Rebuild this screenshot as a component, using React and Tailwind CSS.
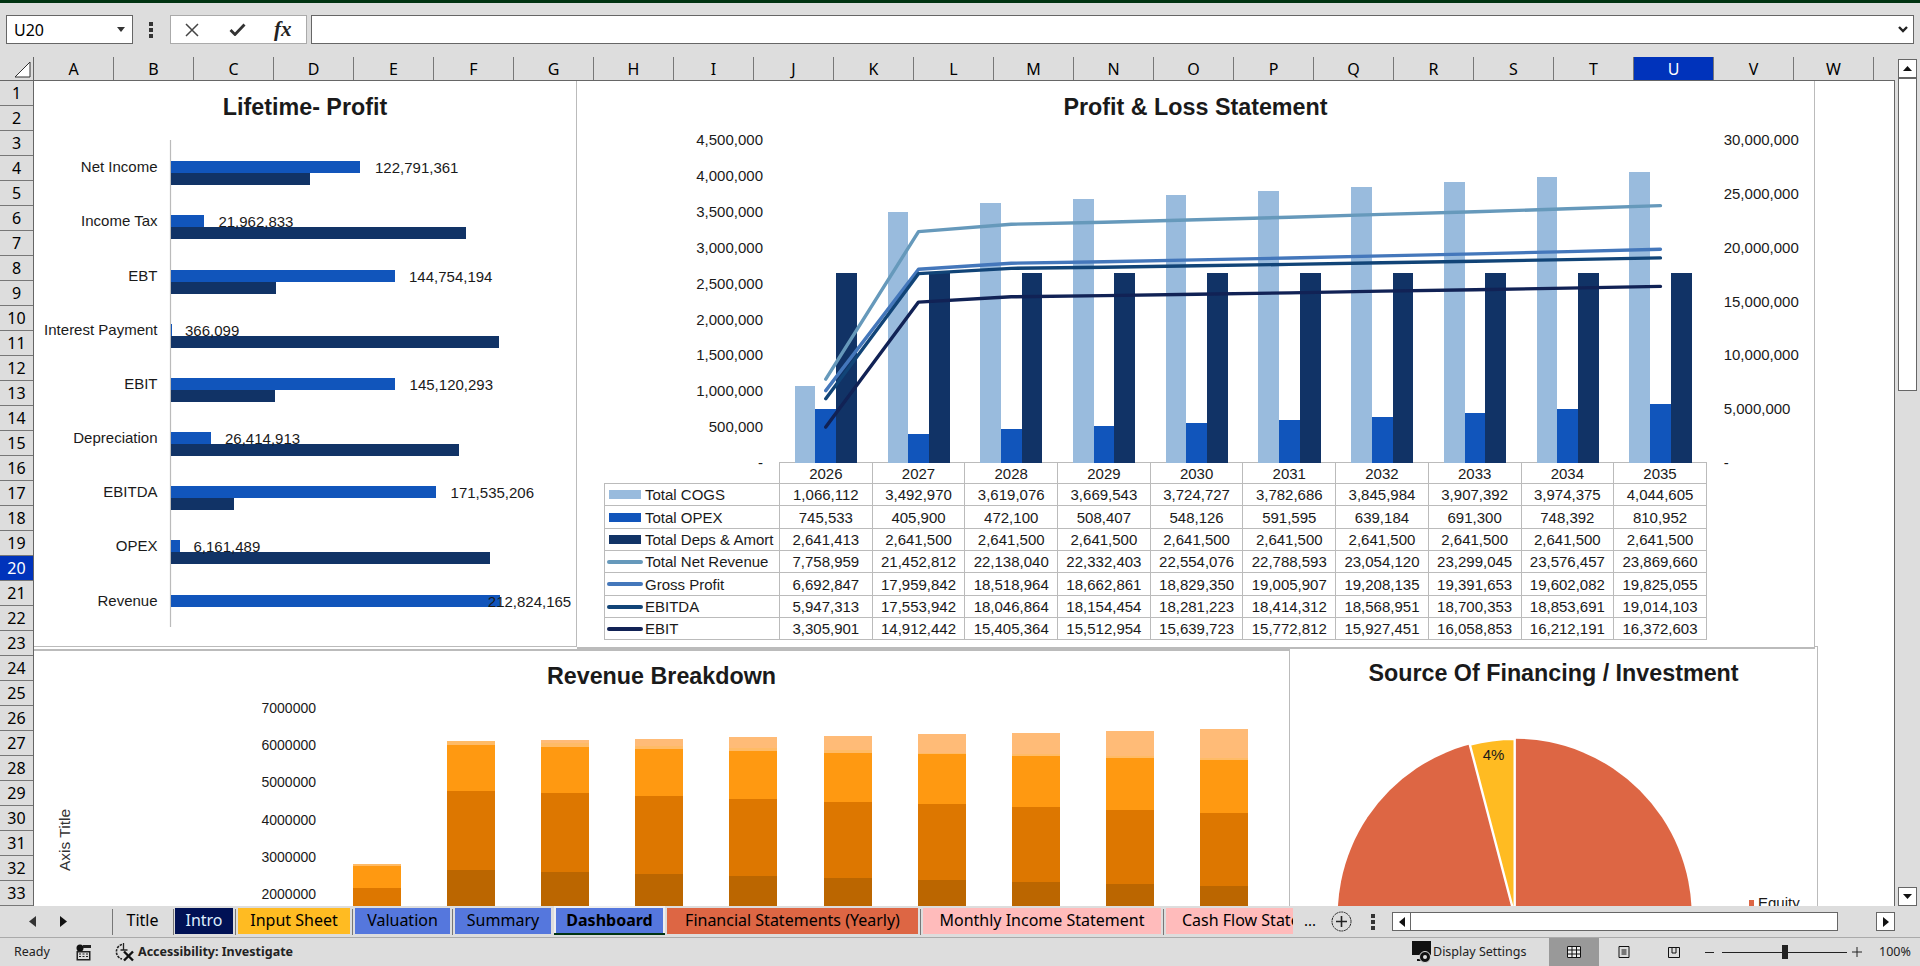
import React from "react";

const COLS = "ABCDEFGHIJKLMNOPQRSTUVW".split("");
const YEARS = [2026, 2027, 2028, 2029, 2030, 2031, 2032, 2033, 2034, 2035];

const TABLE = [
  { name: "Total COGS", kind: "bar", color: "bg-[#99bbdd]", rowH: "h-[22px]", v: [1066112, 3492970, 3619076, 3669543, 3724727, 3782686, 3845984, 3907392, 3974375, 4044605] },
  { name: "Total OPEX", kind: "bar", color: "bg-[#1155bb]", rowH: "h-[23px]", v: [745533, 405900, 472100, 508407, 548126, 591595, 639184, 691300, 748392, 810952] },
  { name: "Total Deps & Amort", kind: "bar", color: "bg-[#113366]", rowH: "h-[22px]", v: [2641413, 2641500, 2641500, 2641500, 2641500, 2641500, 2641500, 2641500, 2641500, 2641500] },
  { name: "Total Net Revenue", kind: "line", color: "bg-[#6699bb]", rowH: "h-[22px]", v: [7758959, 21452812, 22138040, 22332403, 22554076, 22788593, 23054120, 23299045, 23576457, 23869660] },
  { name: "Gross Profit", kind: "line", color: "bg-[#4477bb]", rowH: "h-[23px]", v: [6692847, 17959842, 18518964, 18662861, 18829350, 19005907, 19208135, 19391653, 19602082, 19825055] },
  { name: "EBITDA", kind: "line", color: "bg-[#114477]", rowH: "h-[22px]", v: [5947313, 17553942, 18046864, 18154454, 18281223, 18414312, 18568951, 18700353, 18853691, 19014103] },
  { name: "EBIT", kind: "line", color: "bg-[#112255]", rowH: "h-[22px]", v: [3305901, 14912442, 15405364, 15512954, 15639723, 15772812, 15927451, 16058853, 16212191, 16372603] },
];

const fmt = (n) => n.toLocaleString("en-US");

const LIFETIME = [
  { label: "Net Income", value: "122,791,361", top: 161, blue: 360, dark: 310, vx: 375 },
  { label: "Income Tax", value: "21,962,833", top: 215, blue: 204, dark: 466, vx: 218.4 },
  { label: "EBT", value: "144,754,194", top: 270, blue: 395, dark: 276, vx: 409 },
  { label: "Interest Payment", value: "366,099", top: 324, blue: 172, dark: 499, vx: 185 },
  { label: "EBIT", value: "145,120,293", top: 378, blue: 395, dark: 275, vx: 409.6 },
  { label: "Depreciation", value: "26,414,913", top: 432, blue: 211, dark: 459, vx: 225 },
  { label: "EBITDA", value: "171,535,206", top: 486, blue: 436, dark: 234, vx: 450.6 },
  { label: "OPEX", value: "6,161,489", top: 540, blue: 180, dark: 490, vx: 193.5 },
  { label: "Revenue", value: "212,824,165", top: 595, blue: 500, dark: 0, vx: 487.8 },
];

// y values of each stack: top, pale end, band end, orange end, mid end
const REVENUE = [
  [864, 864, 866, 888, 908],
  [741, 741, 745, 791, 870],
  [740, 743, 747, 793, 872],
  [739, 746, 749, 796, 874],
  [737, 748, 751, 799, 876],
  [736, 750, 753, 802, 878],
  [734, 753, 754, 804, 880],
  [733, 754, 756, 807, 882],
  [731, 756, 758, 810, 884],
  [729, 758, 760, 813, 886],
];

const BASE_Y = 462.7;
const priY = (v) => BASE_Y - (v * 71.8) / 1e6;
const secY = (v) => BASE_Y - (v * 10.77) / 1e6;
const catX = (i) => 779.4 + 92.74 * i + 46.37;

function LifetimeChart() {
  return (
    <svg viewBox="34 133 542 513" width="542" height="513" className="block">
      <g className="font-['Liberation_Sans',sans-serif] text-[15px]" fill="#1a1a1a">
        <line x1="170.5" y1="140" x2="170.5" y2="627" stroke="#bbbbbb" strokeWidth="1.2" />
        {LIFETIME.map((r) => (
          <g key={r.label}>
            <rect x="171" y={r.top} width={r.blue - 171} height="12" fill="#1155bb" />
            {r.dark > 0 && <rect x="171" y={r.top + 12} width={r.dark - 171} height="12" fill="#113366" />}
            <text x="157.5" y={r.top + 11} textAnchor="end">{r.label}</text>
            <text x={r.vx} y={r.top + 12}>{r.value}</text>
          </g>
        ))}
      </g>
    </svg>
  );
}

function PnlPlot() {
  const left = ["4,500,000", "4,000,000", "3,500,000", "3,000,000", "2,500,000", "2,000,000", "1,500,000", "1,000,000", "500,000", "-"];
  const right = ["30,000,000", "25,000,000", "20,000,000", "15,000,000", "10,000,000", "5,000,000", "-"];
  const barColors = ["#99bbdd", "#1155bb", "#113366"];
  const lineColors = ["#6699bb", "#4477bb", "#114477", "#112255"];
  return (
    <svg viewBox="577 133 1237 329" width="1237" height="329" className="block overflow-visible">
      <g shapeRendering="crispEdges">
        {TABLE.slice(0, 3).map((s, si) =>
          s.v.map((v, i) => (
            <rect key={`${si}-${i}`} x={catX(i) - 31 + si * 20.7} y={priY(v)} width="20.7" height={BASE_Y - priY(v)} fill={barColors[si]} />
          ))
        )}
      </g>
      {TABLE.slice(3).map((s, si) => (
        <polyline
          key={s.name}
          points={s.v.map((v, i) => `${catX(i)},${secY(v)}`).join(" ")}
          fill="none"
          stroke={lineColors[si]}
          strokeWidth="3.4"
          strokeLinecap="round"
          strokeLinejoin="round"
        />
      ))}
      <g className="font-['Liberation_Sans',sans-serif] text-[15px]" fill="#1a1a1a">
        {left.map((t, i) => (
          <text key={t} x="763" y={145 + i * 35.9} textAnchor="end">{t}</text>
        ))}
        {right.map((t, i) => (
          <text key={t} x="1723.7" y={145 + i * 53.85}>{t}</text>
        ))}
      </g>
    </svg>
  );
}

function LegendKey({ kind, color }) {
  if (kind === "bar") return <span className={`ml-[4px] mr-[4px] h-[9px] w-[32px] shrink-0 ${color}`} />;
  return <span className={`ml-[2px] mr-[2px] h-[4px] w-[36px] shrink-0 rounded-full ${color}`} />;
}

function PnlTable() {
  return (
    <table className="ml-[27px] w-[1102px] table-fixed border-collapse font-['Liberation_Sans',sans-serif] text-[15px] leading-none text-[#1a1a1a]">
      <colgroup>
        <col className="w-[175px]" />
        {YEARS.map((y) => (
          <col key={y} className="w-[92.7px]" />
        ))}
      </colgroup>
      <thead>
        <tr className="h-[21px]">
          <th className="border-0 p-0" />
          {YEARS.map((y) => (
            <th key={y} className="border border-[#bbbbbb] p-0 text-center font-normal">{y}</th>
          ))}
        </tr>
      </thead>
      <tbody>
        {TABLE.map((row) => (
          <tr key={row.name} className={row.rowH}>
            <td className="border border-[#bbbbbb] p-0">
              <div className="flex items-center whitespace-nowrap">
                <LegendKey kind={row.kind} color={row.color} />
                <span>{row.name}</span>
              </div>
            </td>
            {row.v.map((v, i) => (
              <td key={i} className="border border-[#bbbbbb] p-0 text-center">{fmt(v)}</td>
            ))}
          </tr>
        ))}
      </tbody>
    </table>
  );
}

function RevenueChart() {
  const ticks = ["7000000", "6000000", "5000000", "4000000", "3000000", "2000000"];
  return (
    <svg viewBox="34 702 1255 204" width="1255" height="204" className="block">
      <g className="font-['Liberation_Sans',sans-serif]" fill="#1a1a1a">
        {ticks.map((t, i) => (
          <text key={t} x="316" y={713 + i * 37.2} textAnchor="end" className="text-[14px]">{t}</text>
        ))}
        <text x="64.5" y="840" dy="5" transform="rotate(-90 64.5 840)" textAnchor="middle" fill="#333333" className="text-[15.5px]">Axis Title</text>
      </g>
      <g shapeRendering="crispEdges">
        {REVENUE.map((b, i) => {
          const x = 353 + i * 94.1;
          return (
            <g key={i}>
              <rect x={x} y={b[0]} width="48" height={b[1] - b[0]} fill="#ffbb77" />
              <rect x={x} y={b[1]} width="48" height={b[2] - b[1]} fill="#ffbb66" />
              <rect x={x} y={b[2]} width="48" height={b[3] - b[2]} fill="#ff9911" />
              <rect x={x} y={b[3]} width="48" height={b[4] - b[3]} fill="#dd7700" />
              <rect x={x} y={b[4]} width="48" height={Math.max(0, 906 - b[4])} fill="#bb6600" />
            </g>
          );
        })}
      </g>
    </svg>
  );
}

function PieChart() {
  return (
    <svg viewBox="1290 700 527 206" width="527" height="206" className="block">
      <circle cx="1514.7" cy="915.7" r="177" fill="#dd6644" />
      <path d="M1514.7 915.7 L1469.8 744.5 A177 177 0 0 1 1514.7 738.7 Z" fill="#ffbb22" stroke="#ffffff" strokeWidth="2.4" />
      <g className="font-['Liberation_Sans',sans-serif] text-[15px]" fill="#1a1a1a">
        <text x="1493.5" y="760" textAnchor="middle">4%</text>
        <text x="1758" y="908">Equity</text>
      </g>
      <rect x="1749" y="900" width="5" height="6" fill="#dd6644" />
    </svg>
  );
}

function ChartTitle({ children, className }) {
  return (
    <h2 className={`flex items-center justify-center font-['Liberation_Sans',sans-serif] text-[23.3px] font-bold text-[#1a1a1a] ${className}`}>
      {children}
    </h2>
  );
}

function FormulaBar() {
  return (
    <div className="flex h-[54px] items-start pt-[12px]">
      <div className="ml-[6px] flex h-[29px] w-[127px] items-center justify-between border border-[#666666] bg-white pl-[7px] pr-[7px] text-[16px] text-black">
        <span>U20</span>
        <svg width="8" height="5" viewBox="0 0 8 5"><path d="M0 0h8L4 5z" fill="#333333" /></svg>
      </div>
      <div className="ml-[16px] flex h-[29px] w-[4px] flex-col items-center justify-center gap-[2px]">
        <span className="size-[4px] shrink-0 bg-[#333333]" />
        <span className="size-[4px] shrink-0 bg-[#333333]" />
        <span className="size-[4px] shrink-0 bg-[#333333]" />
      </div>
      <div className="ml-[17px] flex h-[29px] w-[137px] items-center border border-[#aaaaaa] bg-white">
        <svg className="ml-[14px]" width="14" height="14" viewBox="0 0 14 14"><path d="M1 1l12 12M13 1L1 13" stroke="#444444" strokeWidth="1.5" fill="none" /></svg>
        <svg className="ml-[30px]" width="17" height="13" viewBox="0 0 17 13"><path d="M1.5 7l4.5 4.5L15.5 1.5" stroke="#333333" strokeWidth="2.8" fill="none" /></svg>
        <span className="ml-[28px] font-['Liberation_Serif',serif] text-[21px] font-bold italic leading-none text-[#222222]">fx</span>
      </div>
      <div className="ml-[4px] flex h-[29px] w-[1603px] items-center justify-end border border-[#666666] bg-white pr-[5px]">
        <svg width="10" height="7" viewBox="0 0 10 7"><path d="M1 1l4 4 4-4" stroke="#222222" strokeWidth="2.4" fill="none" /></svg>
      </div>
    </div>
  );
}

function ColumnHeader() {
  return (
    <div className="flex h-[24px] border-b border-[#666666]">
      <div className="flex w-[34px] shrink-0 items-end justify-end border-r border-[#666666] pb-[2px] pr-[2px]">
        <svg width="17" height="17" viewBox="0 0 17 17"><path d="M16 1v15H1z" fill="#ffffff" stroke="#333333" strokeWidth="1" /></svg>
      </div>
      {COLS.map((c) => (
        <div
          key={c}
          className={`flex w-[80px] shrink-0 items-center justify-center border-r border-[#777777] text-[16px] ${c === "U" ? "bg-[#0033bb] text-white" : "text-black"}`}
        >
          {c}
        </div>
      ))}
    </div>
  );
}

function RowGutter() {
  return (
    <div className="flex w-[34px] shrink-0 flex-col border-r border-[#666666]">
      {Array.from({ length: 33 }, (_, i) => i + 1).map((n) => (
        <div
          key={n}
          className={`flex h-[25px] shrink-0 items-center justify-center border-b border-[#777777] text-[16px] ${n === 20 ? "bg-[#0033bb] text-white" : "text-black"}`}
        >
          {n}
        </div>
      ))}
    </div>
  );
}

function Sheet() {
  return (
    <div className="flex h-[825px] flex-col overflow-hidden bg-white">
      <div className="relative z-10 flex h-[568px] shrink-0 items-start">
        <div className="h-[566px] w-[543px] shrink-0 border-b border-r border-[#bbbbbb] bg-white">
          <ChartTitle className="h-[52px]">Lifetime- Profit</ChartTitle>
          <LifetimeChart />
        </div>
        <div className="h-[568px] w-[1238px] shrink-0 border-b-2 border-r border-[#bbbbbb] bg-white">
          <ChartTitle className="h-[52px]">{"Profit & Loss Statement"}</ChartTitle>
          <PnlPlot />
          <PnlTable />
        </div>
      </div>
      <div className="flex h-[257px] shrink-0 items-start">
        <div className="h-[257px] w-[1255px] shrink-0 overflow-hidden border-t-2 border-[#bbbbbb] bg-white">
          <ChartTitle className="h-[51px]">Revenue Breakdown</ChartTitle>
          <RevenueChart />
        </div>
        <div className="-mt-[3px] h-[260px] w-[529px] shrink-0 overflow-hidden border-l border-r border-t border-[#bbbbbb] bg-white">
          <ChartTitle className="h-[53px]">Source Of Financing / Investment</ChartTitle>
          <PieChart />
        </div>
      </div>
    </div>
  );
}

function VScrollBar() {
  return (
    <div className="flex h-[849px] w-[25px] flex-col pl-[3px] pt-[2px]">
      <div className="flex h-[19px] w-[19px] items-center justify-center border border-[#666666] bg-white">
        <svg width="9" height="5" viewBox="0 0 9 5"><path d="M4.5 0L9 5H0z" fill="#111111" /></svg>
      </div>
      <div className="h-[313px] w-[19px] border border-[#666666] bg-white" />
      <div className="flex-1" />
      <div className="flex h-[19px] w-[19px] items-center justify-center border border-[#666666] bg-white">
        <svg width="9" height="5" viewBox="0 0 9 5"><path d="M0 0h9L4.5 5z" fill="#111111" /></svg>
      </div>
    </div>
  );
}

function Sep({ className }) {
  return (
    <div className={`flex h-[31px] shrink-0 items-center justify-center ${className}`}>
      <span className="h-[26px] w-px bg-[#777777]" />
    </div>
  );
}

function Tab({ label, className, active }) {
  if (active) {
    return (
      <div className="h-[29px] w-[111px] shrink-0 border-b-2 border-[#003311] bg-[#eeeeee] px-[2px] pt-[2px]">
        <div className="flex h-[25px] items-center justify-center bg-[#5577dd] pb-[2px] text-[16px] font-bold text-black">{label}</div>
      </div>
    );
  }
  return (
    <div className={`mt-[2px] flex h-[26px] shrink-0 items-center justify-center whitespace-nowrap pb-[2px] text-[16px] ${className}`}>{label}</div>
  );
}

function TabBar() {
  return (
    <div className="flex h-[32px] items-start border-b border-[#aaaaaa]">
      <div className="flex h-[31px] w-[112px] shrink-0 items-center pl-[29px]">
        <svg width="7" height="11" viewBox="0 0 7 11"><path d="M7 0v11L0 5.5z" fill="#333333" /></svg>
        <svg className="ml-[24px]" width="7" height="11" viewBox="0 0 7 11"><path d="M0 0v11l7-5.500z" fill="#111111" /></svg>
      </div>
      <Sep className="w-px" />
      <Tab label="Title" className="w-[59px] text-black" />
      <Sep className="w-[3px]" />
      <Tab label="Intro" className="w-[58px] bg-[#001155] text-[#dfefff]" />
      <Sep className="w-[5px]" />
      <Tab label="Input Sheet" className="w-[112px] bg-[#ffbb22] text-black" />
      <Sep className="w-[5px]" />
      <Tab label="Valuation" className="w-[95px] bg-[#5577dd] text-black" />
      <Sep className="w-[5px]" />
      <Tab label="Summary" className="w-[96px] bg-[#5577dd] text-black" />
      <div className="w-[3px] shrink-0" />
      <Tab label="Dashboard" active />
      <div className="w-[2px] shrink-0" />
      <Tab label="Financial Statements (Yearly)" className="w-[251px] bg-[#dd6644] text-black" />
      <Sep className="w-[5px]" />
      <Tab label="Monthly Income Statement" className="w-[238px] bg-[#ffbbbb] text-black" />
      <Sep className="w-[5px]" />
      <Tab label="Cash Flow Statement" className="w-[127px] justify-start overflow-hidden bg-[#ffbbbb] pl-[16px] text-black" />
      <div className="flex h-[31px] w-[34px] shrink-0 items-center justify-center pb-[2px] text-[15px] leading-none text-black">...</div>
      <div className="flex h-[31px] w-[28px] shrink-0 items-center justify-center">
        <svg width="21" height="21" viewBox="0 0 21 21">
          <circle cx="10.5" cy="10.500" r="9.5" fill="none" stroke="#222222" strokeDasharray="2 .6" />
          <path d="M10.500 5v11M5 10.500h11" stroke="#222222" strokeWidth="1.600" />
        </svg>
      </div>
      <div className="ml-[14px] flex h-[31px] w-[8px] shrink-0 flex-col items-center justify-center gap-[2px]">
        <span className="size-[4px] shrink-0 bg-[#333333]" />
        <span className="size-[4px] shrink-0 bg-[#333333]" />
        <span className="size-[4px] shrink-0 bg-[#333333]" />
      </div>
      <div className="ml-[15px] mt-[6px] flex h-[19px] w-[446px] shrink-0 border border-[#666666] bg-white">
        <div className="flex h-full w-[18px] items-center justify-center border-r border-[#666666]">
          <svg width="6" height="10" viewBox="0 0 6 10"><path d="M6 0v10L0 5z" fill="#111111" /></svg>
        </div>
      </div>
      <div className="ml-[38px] mt-[6px] flex h-[19px] w-[19px] shrink-0 items-center justify-center border border-[#666666] bg-white">
        <svg width="6" height="10" viewBox="0 0 6 10"><path d="M0 0v10l6-5z" fill="#111111" /></svg>
      </div>
    </div>
  );
}

function StatusBar() {
  return (
    <div className="flex h-[28px] items-center text-[12.5px] text-[#222222]">
      <span className="ml-[14px] w-[62px] shrink-0">Ready</span>
      <svg width="15" height="17" viewBox="0 0 15 17" className="shrink-0">
        <circle cx="4" cy="4" r="3.500" fill="#111111" />
        <path d="M7 1h8v3H7zM0.500 7h14v9.500H.5z" fill="#222222" />
        <rect x="2" y="8.500" width="11" height="6.500" fill="#dddddd" />
        <path d="M3 10h2M6.500 10h2M10 10h2M3 12.500h2M6.500 12.500h2M10 12.500h2" stroke="#222222" strokeWidth="1.200" />
      </svg>
      <svg className="ml-[24px] shrink-0" width="20" height="20" viewBox="0 0 20 20">
        <path d="M7 2.500A7.500 7.500 0 0 0 7 17" fill="none" stroke="#222222" strokeWidth="1.600" strokeDasharray="2.500 1" />
        <path d="M8.500 1v7M5.500 8h7" stroke="#222222" strokeWidth="1.300" />
        <path d="M9 9.500l9 9M18 9.500l-9 9" stroke="#111111" strokeWidth="2.400" />
      </svg>
      <span className="ml-[3px] w-[1274px] shrink-0 whitespace-nowrap font-bold">Accessibility: Investigate</span>
      <svg className="shrink-0" width="20" height="22" viewBox="0 0 20 22">
        <path d="M0 0h19v14H0z" fill="#111111" />
        <path d="M5 19h4" stroke="#111111" strokeWidth="2" />
        <circle cx="13" cy="16" r="5.500" fill="#111111" stroke="#dddddd" strokeWidth="1" />
        <circle cx="13" cy="16" r="2" fill="#dddddd" />
      </svg>
      <span className="ml-[1px] w-[116px] shrink-0 whitespace-nowrap">Display Settings</span>
      <div className="flex h-[28px] w-[50px] shrink-0 items-center justify-center bg-[#999999]">
        <svg width="14" height="12" viewBox="0 0 14 12" className="bg-[#eeeeee]">
          <path d="M.5.5h13v11H.5zM.5 4h13M.5 8h13M5 .5v11M9.500.5v11" fill="none" stroke="#111111" />
        </svg>
      </div>
      <div className="flex w-[50px] shrink-0 items-center justify-center">
        <svg width="12" height="12" viewBox="0 0 12 12"><path d="M1 .5h10v11H1zM3.500 4h5M3.500 6h5M3.500 8h5" fill="none" stroke="#111111" /></svg>
      </div>
      <div className="flex w-[50px] shrink-0 items-center justify-center">
        <svg width="12" height="11" viewBox="0 0 12 11"><path d="M.5.5h11v10H.5zM4 .5v5.500h4V.5" fill="none" stroke="#111111" /></svg>
      </div>
      <div className="ml-[6px] h-px w-[9px] shrink-0 bg-[#222222]" />
      <div className="relative ml-[8px] flex h-[14px] w-[125px] shrink-0 items-center">
        <div className="h-px w-full bg-[#222222]" />
        <span className="absolute left-[60px] top-0 h-[14px] w-[6px] bg-[#222222]" />
      </div>
      <svg className="ml-[5px] shrink-0" width="10" height="10" viewBox="0 0 10 10"><path d="M5 0v10M0 5h10" stroke="#222222" /></svg>
      <span className="ml-[17px] shrink-0">100%</span>
    </div>
  );
}

export default function App() {
  return (
    <div className="flex h-[966px] w-[1920px] flex-col overflow-hidden bg-[#dddddd] font-['Noto_Sans',sans-serif]">
      <div className="h-[3px] shrink-0 bg-[#003311]" />
      <FormulaBar />
      <div className="flex h-[849px] shrink-0">
        <div className="flex w-[1895px] shrink-0 flex-col">
          <ColumnHeader />
          <div className="flex h-[825px] border-b border-r border-[#666666]">
            <RowGutter />
            <div className="w-[1860px] shrink-0">
              <Sheet />
            </div>
          </div>
        </div>
        <VScrollBar />
      </div>
      <TabBar />
      <StatusBar />
    </div>
  );
}
